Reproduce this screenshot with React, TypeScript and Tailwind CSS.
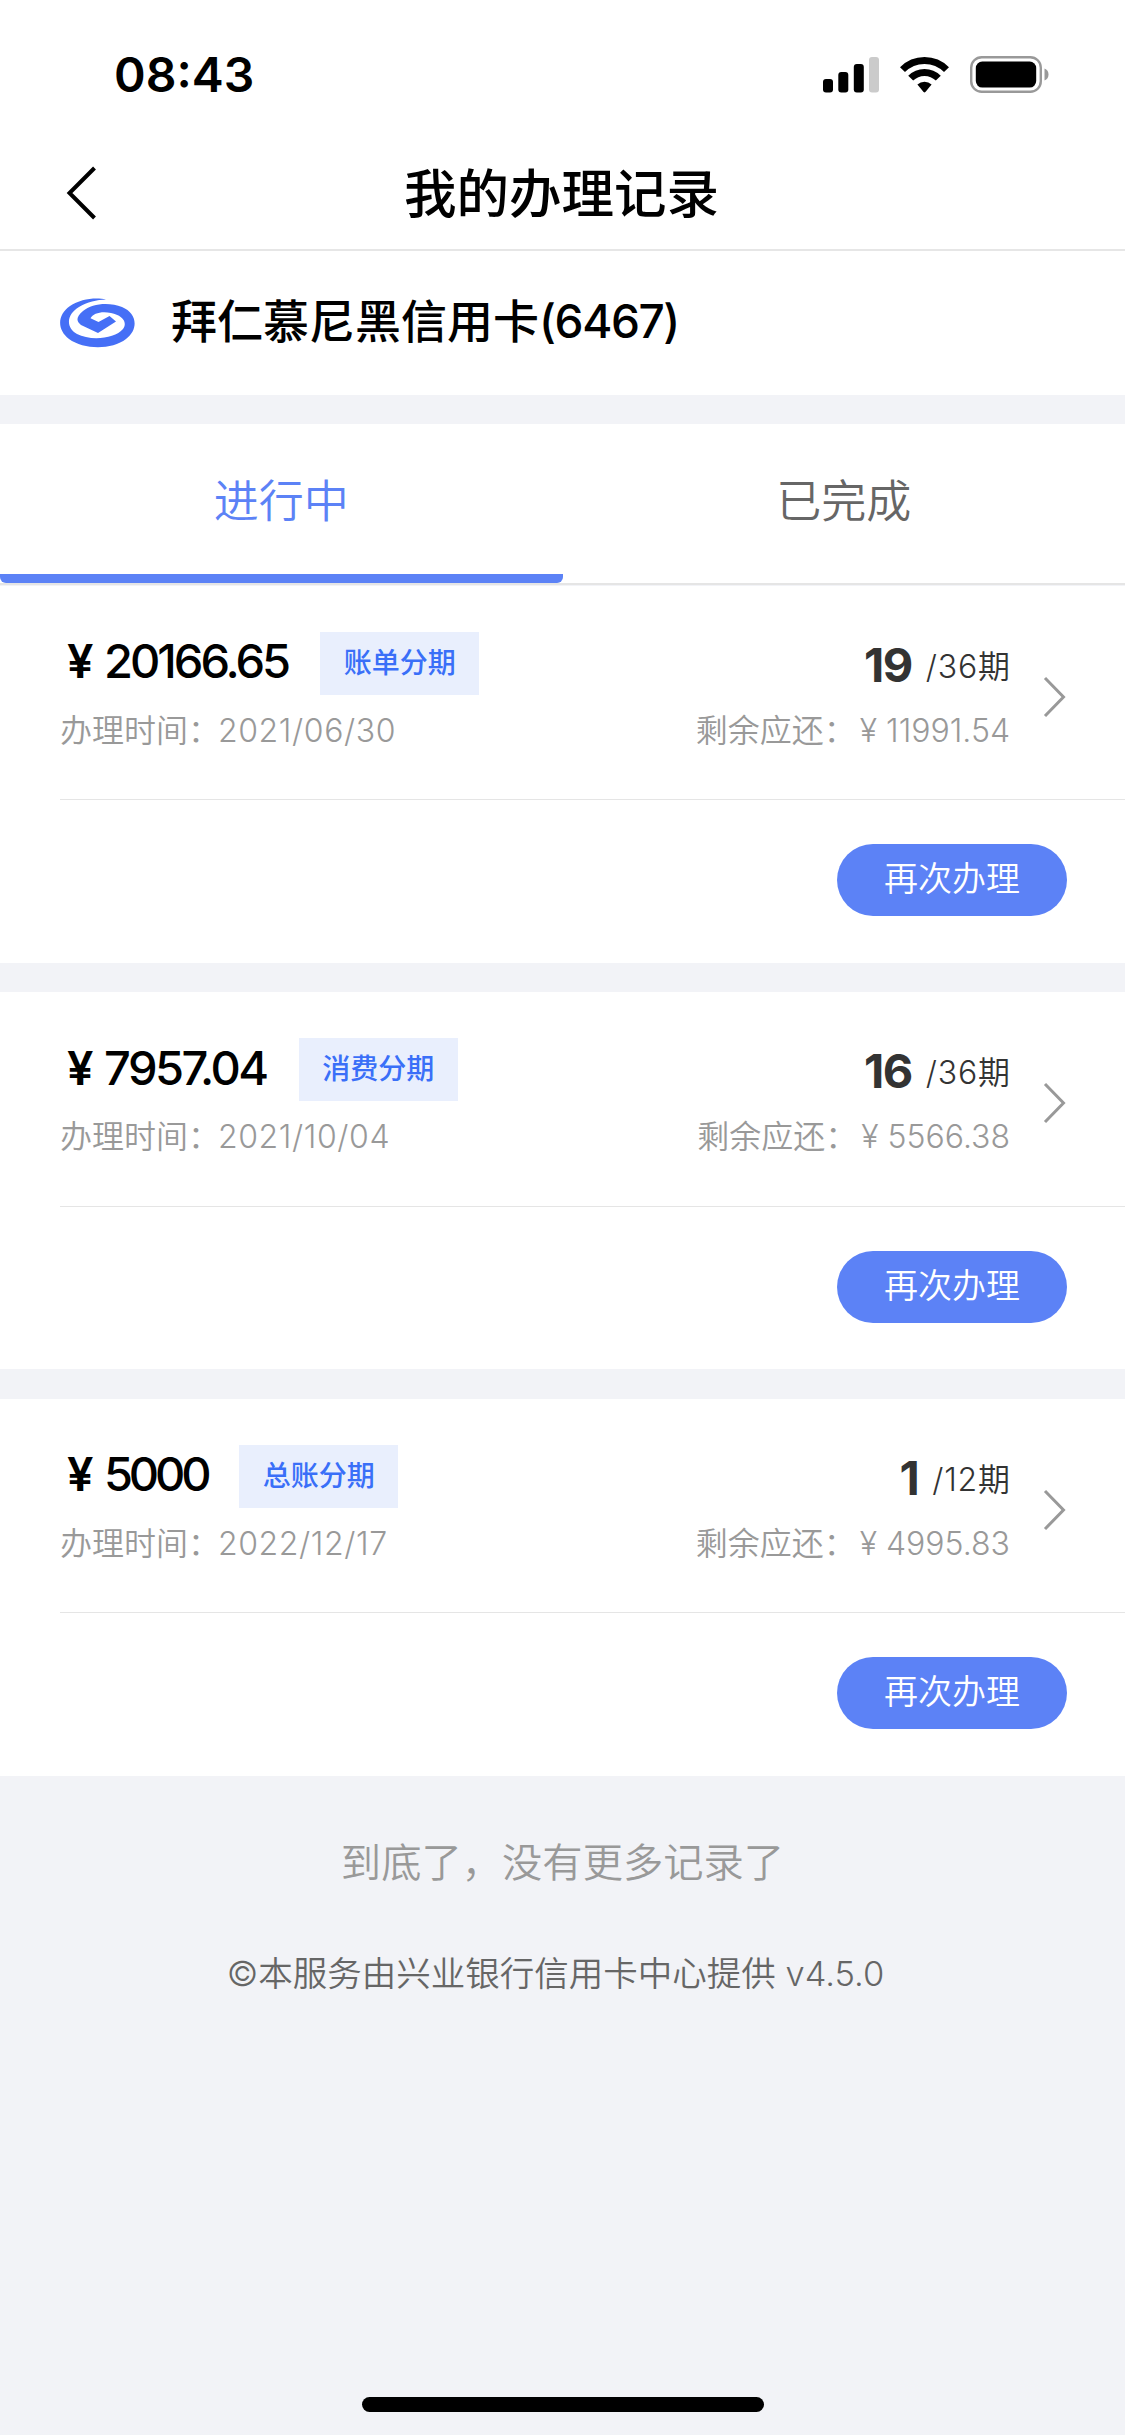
interface InstallmentRecord {
  amount: string;
  amountTracking: string;
  type: string;
  date: string;
  paidPeriods: number;
  totalPeriods: number;
  remaining: string;
}

const records: InstallmentRecord[] = [
  {
    amount: "20166.65",
    amountTracking: "tracking-[-3px]",
    type: "账单分期",
    date: "2021/06/30",
    paidPeriods: 19,
    totalPeriods: 36,
    remaining: "11991.54",
  },
  {
    amount: "7957.04",
    amountTracking: "tracking-[-2.5px]",
    type: "消费分期",
    date: "2021/10/04",
    paidPeriods: 16,
    totalPeriods: 36,
    remaining: "5566.38",
  },
  {
    amount: "5000",
    amountTracking: "tracking-[-4.2px]",
    type: "总账分期",
    date: "2022/12/17",
    paidPeriods: 1,
    totalPeriods: 12,
    remaining: "4995.83",
  },
];

function StatusBar() {
  return (
    <div className="flex h-[144px] items-start justify-between pl-[114px] pr-[74px] pt-[56px]">
      <span className="text-[48px] font-semibold leading-[38px]">08:43</span>
      <svg width="228" height="40" viewBox="0 0 228 40">
        <rect x="0" y="23" width="10" height="13.5" rx="3" />
        <rect x="15.3" y="16" width="10" height="20.5" rx="3" />
        <rect x="30.8" y="8" width="10" height="28.5" rx="3" />
        <rect x="46" y="1" width="10" height="35.5" rx="3" fill="#cbcbcb" />
        <g fill="none" stroke="#000" strokeWidth="7">
          <path d="M79.5 13.6 A31 31 0 0 1 123.5 13.6" />
          <path d="M87.7 22.1 A19.5 19.5 0 0 1 115.3 22.1" />
        </g>
        <path d="M94.4 28.4 A10.5 10.5 0 0 1 108.6 28.4 L102.4 36 Q101.5 36.8 100.6 36 Z" />
        <rect x="148.2" y="1.2" width="69.6" height="34.6" rx="10.5" fill="none" stroke="#999" strokeWidth="2.4" />
        <rect x="152.8" y="5.6" width="60.4" height="26" rx="6.5" />
        <path d="M221.5 12.5 A6.5 6.5 0 0 1 221.5 24.5 Z" fill="#999" />
      </svg>
    </div>
  );
}

function BankLogo() {
  return (
    <svg width="76" height="50" viewBox="0 0 76 50" className="shrink-0">
      <path
        fill="#456ff6"
        d="M46 1.6 C36 -1 20 1 10 8 C-3 17 -3 32 9 41 C24 52 52 52 66 41 C79 31 77 15 62 9 C50 4 32 5 23 13 C16 19 16 23 21 27 L38 35 L56 23.5 L49.5 18 L38.5 24 L30.5 20.3 C33 15 42 13 51 15 C62 17 68 24 63 31 C55 41 30 43 17 36 C5 29 7 16 19 9 C27 4 37 2 46 1.6 Z"
      />
    </svg>
  );
}

function RecordCard({ record }: { record: InstallmentRecord }) {
  return (
    <section className="h-[377.25px] bg-white">
      <div className="ml-[60px] flex h-[214.5px] border-b border-[#e5e5e5] pr-[58px] pt-[46px]">
        <div className="flex-1">
          <div className="flex h-[63px] items-center">
            <span className="-mt-[5px] w-[44px] pl-[7px] text-[47px] font-semibold leading-[63px]">¥</span>
            <span className={`-mt-[5px] text-[47px] font-[550] leading-[63px] ${record.amountTracking}`}>
              {record.amount}
            </span>
            <span className="ml-[32px] h-[63px] w-[159px] bg-[#e9effd] text-center text-[28px] font-medium leading-[62px] text-[#3a6ff8]">
              {record.type}
            </span>
          </div>
          <div className="mt-[13px] flex whitespace-nowrap text-[32px] leading-[46px] text-[#999]">
            <span className="w-[158px] shrink-0">办理时间：</span>
            <span className="tracking-[0.6px]">{record.date}</span>
          </div>
        </div>
        <div className="text-right">
          <div className="flex h-[63px] items-start justify-end text-[#333]">
            <span className="text-[47px] font-bold leading-[66px] tracking-[-1.5px]">{record.paidPeriods}</span>
            <span className="ml-[14px] text-[32px] leading-[70px]">
              <span className="tracking-[0.8px]">/{record.totalPeriods}</span>期
            </span>
          </div>
          <div className="mt-[13px] flex justify-end text-[32px] leading-[46px] text-[#999]">
            <span className="w-[164px] text-left">剩余应还：</span>
            <span>¥ {record.remaining}</span>
          </div>
        </div>
        <svg width="24" height="42" viewBox="0 0 24 42" className="ml-[33px] mt-[44px]" fill="none" stroke="#999" strokeWidth="3">
          <path d="M2 2 L20.5 21 L2 40" />
        </svg>
      </div>
      <div className="flex justify-end pr-[58px] pt-[44px]">
        <button type="button" className="h-[72px] w-[230px] rounded-full bg-[#5c82f6] pb-[2px] text-[34px] leading-[70px] text-white">
          再次办理
        </button>
      </div>
    </section>
  );
}

export default function App() {
  return (
    <div className="flex h-[2435px] w-[1125px] flex-col bg-[#f2f3f7] font-['Inter','Noto_Sans_CJK_SC',sans-serif] font-[350] text-black">
      <header className="h-[251px] border-b-2 border-[#e6e6e6] bg-white">
        <StatusBar />
        <div className="grid h-[98px] grid-cols-[200px_1fr_200px] items-center">
          <svg width="34" height="56" viewBox="0 0 34 56" className="ml-[65px]" fill="none" stroke="#000" strokeWidth="4">
            <path d="M29.5 2 L4.5 27 L29.5 52" />
          </svg>
          <h1 className="pr-[2px] pt-px text-center text-[52.5px] font-medium leading-[98px]">我的办理记录</h1>
        </div>
      </header>

      <div className="flex h-[144px] items-center bg-white pl-[60px]">
        <BankLogo />
        <h2 className="-mt-[3px] ml-[35px] text-[46px] font-medium">
          拜仁慕尼黑信用卡<span className="tracking-[-1.4px]">(6467)</span>
        </h2>
      </div>

      <nav className="mb-[0.5px] mt-[29px] grid h-[161px] shrink-0 grid-cols-2 border-b-2 border-[#e5e5e5] bg-white text-[45px]">
        <button type="button" className="rounded-[6px] border-b-[9px] border-[#5c82f6] pt-[5px] text-[#5c82f6]">
          进行中
        </button>
        <button type="button" className="pb-[4px] text-[#666]">已完成</button>
      </nav>

      <main className="flex flex-col gap-[29.25px]">
        {records.map((record) => (
          <RecordCard key={record.date} record={record} />
        ))}
      </main>

      <p className="mt-[57px] text-center text-[40.3px] leading-[60px] text-[#999]">到底了，没有更多记录了</p>
      <p className="mt-[55px] pr-[14px] text-center text-[34.5px] leading-[52px] text-[#666]">
        ©本服务由兴业银行信用卡中心提供 v4.5.0
      </p>

      <div className="mx-auto mb-[23px] mt-auto h-[15px] w-[402px] rounded-full bg-black" />
    </div>
  );
}
